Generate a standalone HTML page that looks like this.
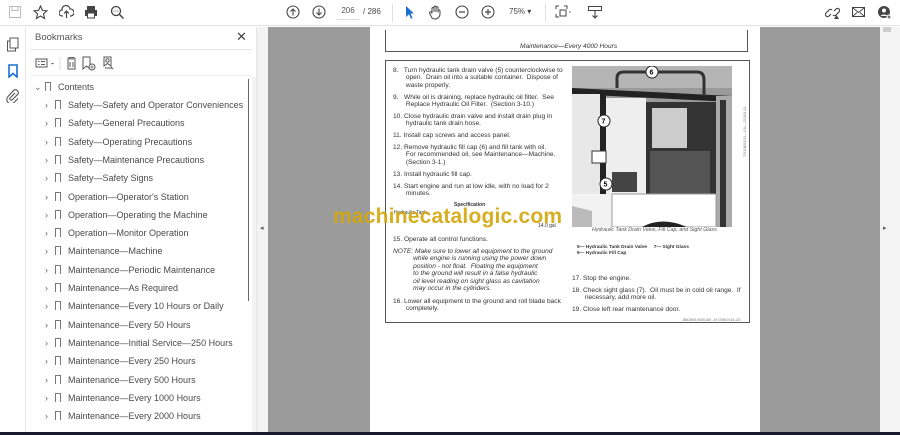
<!DOCTYPE html>
<html><head><meta charset="utf-8"><style>
*{margin:0;padding:0;box-sizing:border-box}
body{width:900px;height:435px;overflow:hidden;background:#fff;font-family:"Liberation Sans",sans-serif;position:relative}
.abs{position:absolute}
.tb{left:0;top:0;width:900px;height:26px;background:#fff;border-bottom:1px solid #e2e2e2}
.ic{position:absolute;top:5px}
.rail{left:0;top:27px;width:26px;height:405px;background:#fff;border-right:1px solid #e6e6e6}
.panel{left:26px;top:27px;width:230px;height:405px;background:#fff}
.bm{position:absolute;left:0;font-size:9px;color:#4a4a4a;white-space:nowrap}
.bm .ch{display:inline-block;width:10px;color:#666;font-size:9px}
.bk{display:inline-block;width:6px;height:9px;border:1px solid #777;border-bottom:none;vertical-align:-1px;margin:0 7px 0 0;position:relative}
.gray{background:#9b9b9b}
.page{left:370px;top:27px;width:390px;height:405px;background:#fff}
.t{position:absolute;font-size:6.6px;color:#333;line-height:7.4px;white-space:nowrap}
</style></head><body>
<div class="abs tb">
 <svg class="ic" style="left:8px" width="14" height="14" viewBox="0 0 14 14"><rect x="1.5" y="1.5" width="11" height="11" fill="none" stroke="#bbb"/><rect x="4" y="1.5" width="6" height="4" fill="none" stroke="#bbb"/></svg>
 <svg class="ic" style="left:33px" width="15" height="15" viewBox="0 0 15 15"><path d="M7.5 1L9.4 5.4 14 5.8 10.5 8.8 11.6 13.5 7.5 11 3.4 13.5 4.5 8.8 1 5.8 5.6 5.4Z" fill="none" stroke="#444" stroke-width="1.1"/></svg>
 <svg class="ic" style="left:59px" width="15" height="14" viewBox="0 0 15 14"><path d="M4 11H3a3 3 0 010-6 4 4 0 018-1 3 3 0 011 7h-1M7.5 13V6M5 8.5l2.5-2.5 2.5 2.5" fill="none" stroke="#444" stroke-width="1.2"/></svg>
 <svg class="ic" style="left:84px" width="14" height="14" viewBox="0 0 14 14"><rect x="3" y="1" width="8" height="4" fill="#444"/><rect x="1" y="5" width="12" height="6" fill="#444"/><rect x="3.5" y="8" width="7" height="5" fill="#fff" stroke="#444"/></svg>
 <svg class="ic" style="left:110px" width="15" height="15" viewBox="0 0 15 15"><circle cx="6" cy="6" r="4.5" fill="none" stroke="#444" stroke-width="1.3"/><path d="M9.5 9.5L13.5 13.5" stroke="#444" stroke-width="1.5"/><path d="M3.5 6h5" stroke="#444" stroke-width=".8" stroke-dasharray="1 .8"/></svg>
 <svg class="ic" style="left:286px" width="14" height="14" viewBox="0 0 14 14"><circle cx="7" cy="7" r="6" fill="none" stroke="#444" stroke-width="1.1"/><path d="M7 10.5V4M4.5 6.5L7 4l2.5 2.5" fill="none" stroke="#444" stroke-width="1.1"/></svg>
 <svg class="ic" style="left:312px" width="14" height="14" viewBox="0 0 14 14"><circle cx="7" cy="7" r="6" fill="none" stroke="#444" stroke-width="1.1"/><path d="M7 3.5V10M4.5 7.5L7 10l2.5-2.5" fill="none" stroke="#444" stroke-width="1.1"/></svg>
 <div class="abs" style="left:337px;top:6px;width:22px;height:14px;font-size:8px;color:#555;text-align:center;border-bottom:1px solid #ddd">206</div>
 <div class="abs" style="left:363px;top:7px;font-size:8px;color:#444">/ 286</div>
 <div class="abs" style="left:392px;top:4px;width:1px;height:18px;background:#e0e0e0"></div>
 <svg class="ic" style="left:404px" width="12" height="15" viewBox="0 0 12 15"><path d="M2 1L10 8.5H6.5L8.5 13 7 13.7 5 9.2 2 12Z" fill="#1a6fd1"/></svg>
 <svg class="ic" style="left:428px" width="15" height="15" viewBox="0 0 15 15"><path d="M4 8V3.5a1 1 0 012 0V7M6 6.5V2a1 1 0 012 0v5M8 6.5V2.8a1 1 0 012 0V7.5M10 6a1 1 0 012 0v3a5 5 0 01-5 5H6.5A4 4 0 013 11L1.5 8a1 1 0 011.8-.8L4 8.5" fill="none" stroke="#444" stroke-width="1"/></svg>
 <svg class="ic" style="left:455px" width="14" height="14" viewBox="0 0 14 14"><circle cx="7" cy="7" r="6" fill="none" stroke="#444" stroke-width="1.1"/><path d="M4 7h6" stroke="#444" stroke-width="1.2"/></svg>
 <svg class="ic" style="left:481px" width="14" height="14" viewBox="0 0 14 14"><circle cx="7" cy="7" r="6" fill="none" stroke="#444" stroke-width="1.1"/><path d="M4 7h6M7 4v6" stroke="#444" stroke-width="1.2"/></svg>
 <div class="abs" style="left:509px;top:7px;font-size:8px;color:#444">75% ▾</div>
 <div class="abs" style="left:545px;top:4px;width:1px;height:18px;background:#e0e0e0"></div>
 <svg class="ic" style="left:555px" width="16" height="15" viewBox="0 0 16 15"><path d="M1 4V1h3M9 1h3v3M1 9v3h3M5 5h6v6H5z" fill="none" stroke="#444" stroke-width="1"/><path d="M14 7l1.5 0" stroke="#444"/></svg>
 <svg class="ic" style="left:587px" width="16" height="15" viewBox="0 0 16 15"><rect x="1.5" y="1.5" width="13" height="4" fill="none" stroke="#444"/><path d="M8 6v7M5.5 10.5L8 13l2.5-2.5" fill="none" stroke="#444" stroke-width="1.1"/></svg>
 <svg class="ic" style="left:825px" width="15" height="15" viewBox="0 0 15 15"><path d="M6 9l-2 2a2 2 0 01-3-3l3-3a2 2 0 013 0M9 6l2-2a2 2 0 013 3l-3 3a2 2 0 01-3 0" fill="none" stroke="#444" stroke-width="1.2"/><path d="M9 14l2.5-4 2.5 4z" fill="#444"/></svg>
 <svg class="ic" style="left:851px" width="15" height="14" viewBox="0 0 15 14"><rect x="1.5" y="2.5" width="12" height="9" fill="none" stroke="#444"/><path d="M1.5 2.5l6 5 6-5M1.5 11.5l4.5-4M13.5 11.5L9 7.5" fill="none" stroke="#444" stroke-width=".9"/></svg>
 <svg class="ic" style="left:877px" width="15" height="15" viewBox="0 0 15 15"><circle cx="7" cy="7" r="6" fill="#444"/><circle cx="7" cy="5.5" r="2" fill="#fff"/><path d="M3.5 11a4 3 0 017 0" fill="#fff"/><circle cx="12" cy="12" r="2.5" fill="#fff"/><path d="M12 10.5v3M10.5 12h3" stroke="#444"/></svg>
</div>

<div class="abs rail">
 <svg class="abs" style="left:6px;top:10px" width="14" height="15" viewBox="0 0 14 15"><rect x="4" y="1" width="8" height="10" fill="none" stroke="#555"/><path d="M4 4H1.5v10h8v-3" fill="none" stroke="#555"/></svg>
 <svg class="abs" style="left:7px;top:37px" width="12" height="14" viewBox="0 0 12 14"><path d="M2 1h8v12l-4-3.5L2 13z" fill="none" stroke="#1a6fd1" stroke-width="1.6"/></svg>
 <svg class="abs" style="left:6px;top:62px" width="14" height="14" viewBox="0 0 14 14"><path d="M9 4l-5 5a1.5 1.5 0 002 2l6-6a3 3 0 00-4-4L2 7.5a4 4 0 006 6l4-4" fill="none" stroke="#555" stroke-width="1.1"/></svg>
</div>

<div class="abs panel">
 <div class="abs" style="left:9px;top:5px;font-size:9.5px;color:#555">Bookmarks</div>
 <div class="abs" style="left:210px;top:2px;font-size:13px;color:#444">✕</div>
 <div class="abs" style="left:4px;top:22px;width:222px;height:1px;background:#e6e6e6"></div>
 <svg class="abs" style="left:9px;top:29px" width="110" height="15" viewBox="0 0 110 15">
  <rect x="1" y="3" width="11" height="8" fill="none" stroke="#555"/><path d="M3 5.5h1.5M6 5.5h4M3 8.5h1.5M6 8.5h4" stroke="#555"/><path d="M16 7l1.5 1.5L19 7z" fill="#555"/>
  <path d="M25 1v13" stroke="#ddd"/>
  <path d="M32 3h9M34 3V1.5h5V3M33 4v9h7V4M35 6v5M38 6v5" fill="none" stroke="#555"/>
  <path d="M48 1h7v12l-3.5-3L48 13z" fill="none" stroke="#555"/><circle cx="57" cy="11" r="3" fill="#fff" stroke="#555"/><path d="M57 9.5v3M55.5 11h3" stroke="#555" stroke-width=".8"/>
  <path d="M69 1h7v9l-3.5-2.5L69 10z M70 12h7" fill="none" stroke="#555"/><circle cx="72.5" cy="4.5" r="1.7" fill="none" stroke="#555"/><path d="M76 11l2 2" stroke="#555"/>
 </svg>
 <div class="abs" style="left:4px;top:48px;width:222px;height:1px;background:#eee"></div>
 <div class="abs" style="left:222px;top:52px;width:1px;height:222px;background:#666"></div>
 <div class="abs" style="left:226px;top:50px;width:4px;height:355px;background:#f3f3f3"></div>
 <div class="bm" style="left:8px;top:55px"><span class="ch" style="width:11px">⌄</span><span class="bk"></span>Contents</div>
 <div id="list"></div>
</div>
<div class="abs" style="left:256px;top:27px;width:12px;height:405px;background:#f3f3f3;border-left:1px solid #e6e6e6"></div>
<div class="abs" style="left:260px;top:224px;font-size:7px;color:#555">◂</div>
<div class="abs gray" style="left:268px;top:27px;width:102px;height:405px"></div>
<div class="abs gray" style="left:760px;top:27px;width:120px;height:405px"></div>
<div class="abs" style="left:880px;top:27px;width:20px;height:405px;background:#f3f3f3"></div>
<div class="abs" style="left:883px;top:27px;width:8px;height:5px;background:#ccc"></div>
<div class="abs" style="left:883px;top:224px;font-size:7px;color:#555">▸</div>
<div class="abs" style="left:0;top:432px;width:900px;height:3px;background:#1a1a2e"></div>

<div class="abs page">
 <div class="abs" style="left:15px;top:3px;width:363px;height:22px;border:1px solid #555;border-top:none"></div>
 <div class="t" style="left:150px;top:16px;font-style:italic">Maintenance—Every 4000 Hours</div>
 <div class="abs" style="left:15px;top:33px;width:365px;height:263px;border:1px solid #555"></div>
 <div class="t" style="left:23px;top:40px">8.&nbsp;&nbsp; Turn hydraulic tank drain valve (5) counterclockwise to<br>&nbsp;&nbsp;&nbsp;&nbsp;&nbsp;&nbsp; open.&nbsp; Drain oil into a suitable container.&nbsp; Dispose of<br>&nbsp;&nbsp;&nbsp;&nbsp;&nbsp;&nbsp; waste properly.</div>
 <div class="t" style="left:23px;top:67px">9.&nbsp;&nbsp; While oil is draining, replace hydraulic oil filter.&nbsp; See<br>&nbsp;&nbsp;&nbsp;&nbsp;&nbsp;&nbsp; Replace Hydraulic Oil Filter.&nbsp; (Section 3-10.)</div>
 <div class="t" style="left:23px;top:86px">10. Close hydraulic drain valve and install drain plug in<br>&nbsp;&nbsp;&nbsp;&nbsp;&nbsp;&nbsp; hydraulic tank drain hose.</div>
 <div class="t" style="left:23px;top:105px">11. Install cap screws and access panel.</div>
 <div class="t" style="left:23px;top:117px">12. Remove hydraulic fill cap (6) and fill tank with oil.<br>&nbsp;&nbsp;&nbsp;&nbsp;&nbsp;&nbsp; For recommended oil, see Maintenance—Machine.<br>&nbsp;&nbsp;&nbsp;&nbsp;&nbsp;&nbsp; (Section 3-1.)</div>
 <div class="t" style="left:23px;top:144px">13. Install hydraulic fill cap.</div>
 <div class="t" style="left:23px;top:156px">14. Start engine and run at low idle, with no load for 2<br>&nbsp;&nbsp;&nbsp;&nbsp;&nbsp;&nbsp; minutes.</div>
 <div class="t" style="left:84px;top:175px;font-size:5px;font-weight:bold">Specification</div>
 <div class="t" style="left:24px;top:183px;font-size:5px">Hydraulic Tank</div>
 <div class="t" style="left:168px;top:196px;font-size:5px">14.0 gal</div>
 <div class="t" style="left:23px;top:209px">15. Operate all control functions.</div>
 <div class="t" style="left:23px;top:221px;font-style:italic">NOTE: Make sure to lower all equipment to the ground<br>&nbsp;&nbsp;&nbsp;&nbsp;&nbsp;&nbsp;&nbsp;&nbsp;&nbsp;&nbsp; while engine is running using the power down<br>&nbsp;&nbsp;&nbsp;&nbsp;&nbsp;&nbsp;&nbsp;&nbsp;&nbsp;&nbsp; position - not float.&nbsp; Floating the equipment<br>&nbsp;&nbsp;&nbsp;&nbsp;&nbsp;&nbsp;&nbsp;&nbsp;&nbsp;&nbsp; to the ground will result in a false hydraulic<br>&nbsp;&nbsp;&nbsp;&nbsp;&nbsp;&nbsp;&nbsp;&nbsp;&nbsp;&nbsp; oil level reading on sight glass as cavitation<br>&nbsp;&nbsp;&nbsp;&nbsp;&nbsp;&nbsp;&nbsp;&nbsp;&nbsp;&nbsp; may occur in the cylinders.</div>
 <div class="t" style="left:23px;top:271px">16. Lower all equipment to the ground and roll blade back<br>&nbsp;&nbsp;&nbsp;&nbsp;&nbsp;&nbsp; completely.</div>
 <svg class="abs" style="left:202px;top:39px" width="160" height="161" viewBox="0 0 160 161">
  <rect width="160" height="161" fill="#9a9a9a"/>
  <rect x="0" y="0" width="160" height="22" fill="#b5b5b5"/>
  <path d="M0 22L160 30V36L0 28Z" fill="#222"/>
  <path d="M45 22V12Q45 6 52 6H125Q132 6 132 14V30" fill="none" stroke="#333" stroke-width="3"/>
  <rect x="0" y="28" width="30" height="100" fill="#e8e8e8"/>
  <rect x="28" y="28" width="6" height="105" fill="#222"/>
  <rect x="34" y="32" width="40" height="100" fill="#eee"/>
  <rect x="74" y="36" width="70" height="100" fill="#333"/>
  <rect x="80" y="42" width="35" height="40" fill="#ccc"/>
  <rect x="78" y="85" width="60" height="45" fill="#555"/>
  <rect x="144" y="30" width="16" height="131" fill="#aaa"/>
  <rect x="148" y="34" width="6" height="127" fill="#333"/>
  <rect x="0" y="128" width="144" height="33" fill="#f2f2f2"/>
  <rect x="40" y="128" width="104" height="33" fill="#fff" stroke="#999"/>
  <path d="M70 161Q90 150 115 161Z" fill="#222"/>
  <path d="M0 140L20 145V161H0Z" fill="#bbb"/>
  <rect x="40" y="106" width="25" height="20" fill="#444"/>
  <rect x="20" y="85" width="14" height="12" fill="#fff" stroke="#333"/>
  <circle cx="80" cy="6" r="6" fill="#fff" stroke="#222"/><text x="77.5" y="8.5" font-size="7" font-family="Liberation Sans" font-weight="bold">6</text>
  <circle cx="32" cy="55" r="6" fill="#fff" stroke="#222"/><text x="29.5" y="57.5" font-size="7" font-family="Liberation Sans" font-weight="bold">7</text>
  <circle cx="34" cy="118" r="6" fill="#fff" stroke="#222"/><text x="31.5" y="120.5" font-size="7" font-family="Liberation Sans" font-weight="bold">5</text>
 </svg>
 <div class="t" style="left:371px;top:130px;font-size:4px;transform:rotate(-90deg);transform-origin:left top;color:#777">TX1083129—UN—22JUL11</div>
 <div class="t" style="left:222px;top:200px;font-size:5.3px;font-style:italic;color:#555">Hydraulic Tank Drain Valve, Fill Cap, and Sight Glass</div>
 <div class="t" style="left:207px;top:218px;font-size:4.8px;font-weight:bold;line-height:6px">5— Hydraulic Tank Drain Valve&nbsp;&nbsp;&nbsp;&nbsp; 7— Sight Glass<br>6— Hydraulic Fill Cap</div>
 <div class="t" style="left:202px;top:248px">17. Stop the engine.</div>
 <div class="t" style="left:202px;top:260px">18. Check sight glass (7).&nbsp; Oil must be in cold oil range.&nbsp; If<br>&nbsp;&nbsp;&nbsp;&nbsp;&nbsp;&nbsp; necessary, add more oil.</div>
 <div class="t" style="left:202px;top:279px">19. Close left rear maintenance door.</div>
 <div class="t" style="left:312px;top:290px;font-size:3.6px;color:#777">JB62894,0000180 -19-03NOV16-2/2</div>
</div>
<div class="abs" style="left:333px;top:205px;font-size:21px;font-weight:bold;color:#d4a80e;letter-spacing:0.2px;opacity:.92">machinecatalogic.com</div>

<script>
var items=["Safety—Safety and Operator Conveniences","Safety—General Precautions","Safety—Operating Precautions","Safety—Maintenance Precautions","Safety—Safety Signs","Operation—Operator's Station","Operation—Operating the Machine","Operation—Monitor Operation","Maintenance—Machine","Maintenance—Periodic Maintenance","Maintenance—As Required","Maintenance—Every 10 Hours or Daily","Maintenance—Every 50 Hours","Maintenance—Initial Service—250 Hours","Maintenance—Every 250 Hours","Maintenance—Every 500 Hours","Maintenance—Every 1000 Hours","Maintenance—Every 2000 Hours"];
var h="";for(var i=0;i<items.length;i++){h+='<div class="bm" style="left:19px;top:'+(73+i*18.3)+'px"><span class="ch">›</span><span class="bk"></span>'+items[i]+'</div>';}
document.getElementById("list").innerHTML=h;
</script>
</body></html>
